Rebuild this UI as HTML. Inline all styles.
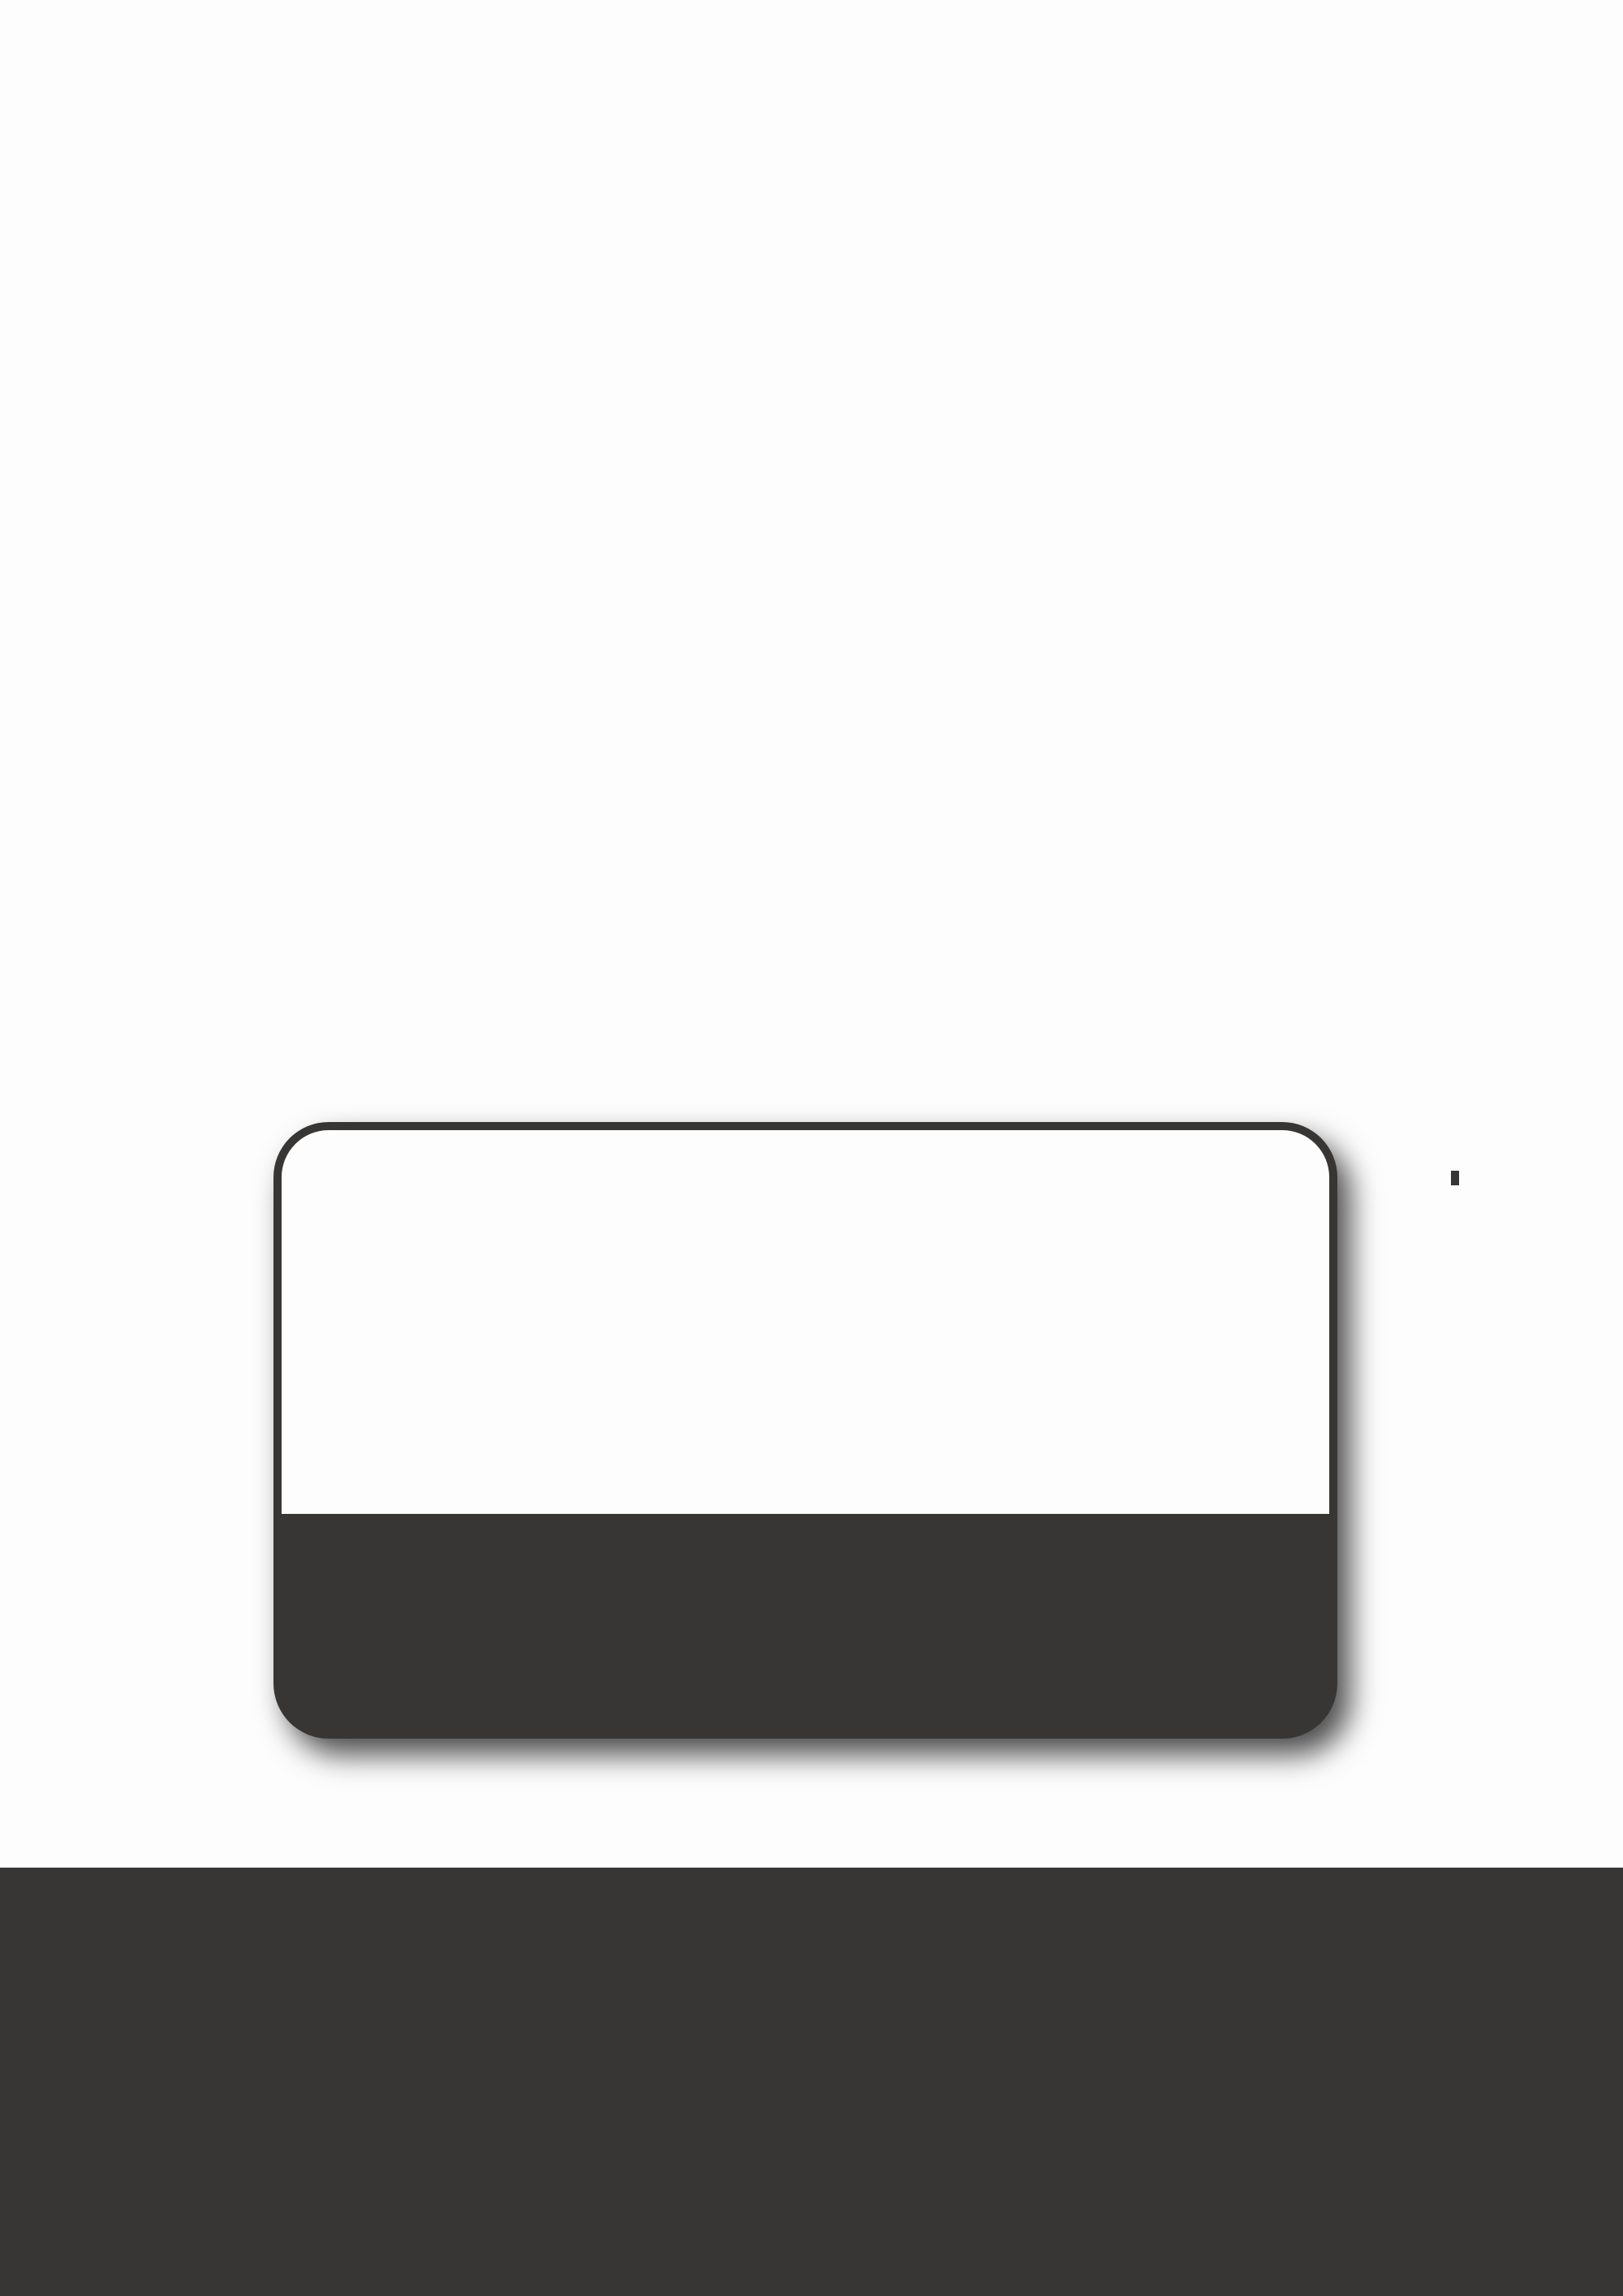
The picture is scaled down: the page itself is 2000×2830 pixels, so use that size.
<!DOCTYPE html>
<html><head><meta charset="utf-8"><style>
html,body{margin:0;padding:0;width:2000px;height:2830px;background:#fdfdfd;overflow:hidden;position:relative}
.card{position:absolute;left:337px;top:1383px;width:1311px;height:760px;background:#373635;border-radius:68px;box-shadow:16px 20px 36px rgba(0,0,0,0.7);overflow:hidden}
.top{position:absolute;left:10px;top:10px;right:10px;height:473px;background:#fdfdfd;border-radius:58px 58px 0 0}
.mark{position:absolute;left:1788px;top:1443px;width:10px;height:18px;background:#373635}
.band{position:absolute;left:0;top:2302px;width:2000px;height:528px;background:#373635}
</style></head><body>
<div class="card"><div class="top"></div></div>
<div class="mark"></div>
<div class="band"></div>
</body></html>
